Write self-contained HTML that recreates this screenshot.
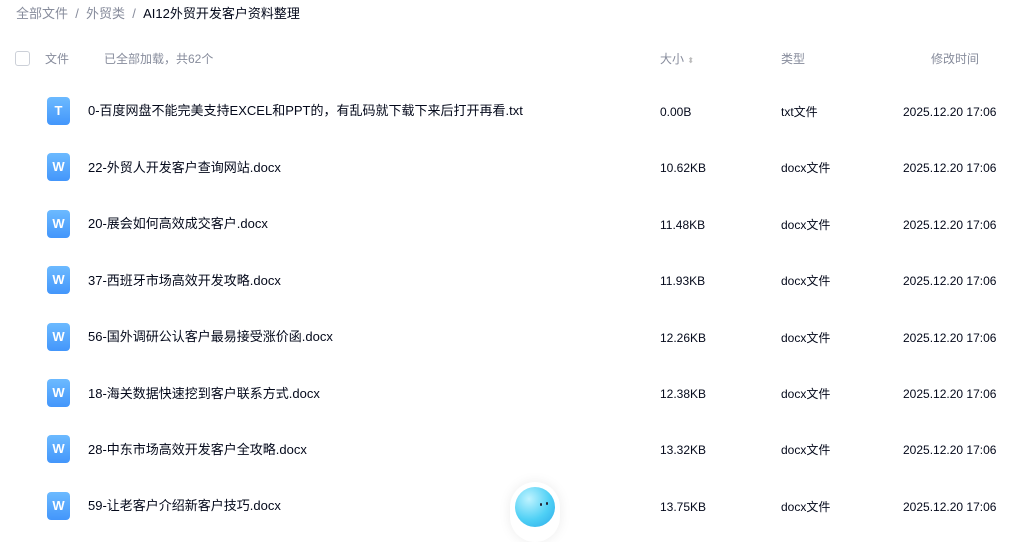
<!DOCTYPE html>
<html><head><meta charset="utf-8"><style>
body{margin:0;width:1024px;height:532px;overflow:hidden;background:#fff;font-family:"Liberation Sans","Noto Sans CJK SC",sans-serif;color:#03081a;position:relative}
.a{position:absolute;white-space:nowrap;line-height:16px}
.bc{top:6px;left:16px;font-size:13px;color:#878c9c}
.bc b{font-weight:normal;color:#03081a}
.h{top:51px;font-size:12px;color:#878c9c}
.cb{position:absolute;left:15px;top:51px;width:13px;height:13px;border:1px solid #ccd0d8;border-radius:3px}
.ic{position:absolute;left:47px;width:23px;height:28px;border-radius:4px;background:linear-gradient(#6cbaff,#4396fb);color:#fff;font-weight:bold;font-size:13px;text-align:center;line-height:28px}
.n{left:88px;font-size:13px}
.s{left:660px;font-size:12px}
.t{left:781px;font-size:12px}
.d{left:903px;font-size:12px}
</style></head><body>
<div class="a bc">全部文件 &nbsp;/&nbsp; 外贸类 &nbsp;/&nbsp; <b>AI12外贸开发客户资料整理</b></div>
<div class="cb"></div>
<div class="a h" style="left:45px">文件</div>
<div class="a h" style="left:104px">已全部加载，共62个</div>
<div class="a h" style="left:660px">大小 <span style="font-size:8px;color:#bbb">⬍</span></div>
<div class="a h" style="left:781px">类型</div>
<div class="a h" style="left:931px">修改时间</div>

<div class="ic" style="top:97px">T</div><div class="a n" style="top:103px">0-百度网盘不能完美支持EXCEL和PPT的，有乱码就下载下来后打开再看.txt</div><div class="a s" style="top:104px">0.00B</div><div class="a t" style="top:104px">txt文件</div><div class="a d" style="top:104px">2025.12.20 17:06</div>

<div class="ic" style="top:153px">W</div><div class="a n" style="top:160px">22-外贸人开发客户查询网站.docx</div><div class="a s" style="top:160px">10.62KB</div><div class="a t" style="top:160px">docx文件</div><div class="a d" style="top:160px">2025.12.20 17:06</div>

<div class="ic" style="top:210px">W</div><div class="a n" style="top:216px">20-展会如何高效成交客户.docx</div><div class="a s" style="top:217px">11.48KB</div><div class="a t" style="top:217px">docx文件</div><div class="a d" style="top:217px">2025.12.20 17:06</div>

<div class="ic" style="top:266px">W</div><div class="a n" style="top:273px">37-西班牙市场高效开发攻略.docx</div><div class="a s" style="top:273px">11.93KB</div><div class="a t" style="top:273px">docx文件</div><div class="a d" style="top:273px">2025.12.20 17:06</div>

<div class="ic" style="top:323px">W</div><div class="a n" style="top:329px">56-国外调研公认客户最易接受涨价函.docx</div><div class="a s" style="top:330px">12.26KB</div><div class="a t" style="top:330px">docx文件</div><div class="a d" style="top:330px">2025.12.20 17:06</div>

<div class="ic" style="top:379px">W</div><div class="a n" style="top:386px">18-海关数据快速挖到客户联系方式.docx</div><div class="a s" style="top:386px">12.38KB</div><div class="a t" style="top:386px">docx文件</div><div class="a d" style="top:386px">2025.12.20 17:06</div>

<div class="ic" style="top:435px">W</div><div class="a n" style="top:442px">28-中东市场高效开发客户全攻略.docx</div><div class="a s" style="top:442px">13.32KB</div><div class="a t" style="top:442px">docx文件</div><div class="a d" style="top:442px">2025.12.20 17:06</div>

<div class="ic" style="top:492px">W</div><div class="a n" style="top:498px">59-让老客户介绍新客户技巧.docx</div><div class="a s" style="top:499px">13.75KB</div><div class="a t" style="top:499px">docx文件</div><div class="a d" style="top:499px">2025.12.20 17:06</div>

<div style="position:absolute;left:510px;top:482px;width:50px;height:60px;border-radius:25px;background:#fff;box-shadow:0 0 12px rgba(0,0,0,.08)"></div>
<div style="position:absolute;left:515px;top:487px;width:40px;height:40px;border-radius:50%;background:radial-gradient(circle at 35% 30%,#bff3ff,#4fd0f5 55%,#2aa8e8)"></div>
<div style="position:absolute;left:540px;top:503px;width:2px;height:3px;background:#223;border-radius:1px"></div>
<div style="position:absolute;left:546px;top:502px;width:2px;height:3px;background:#223;border-radius:1px"></div>
</body></html>
